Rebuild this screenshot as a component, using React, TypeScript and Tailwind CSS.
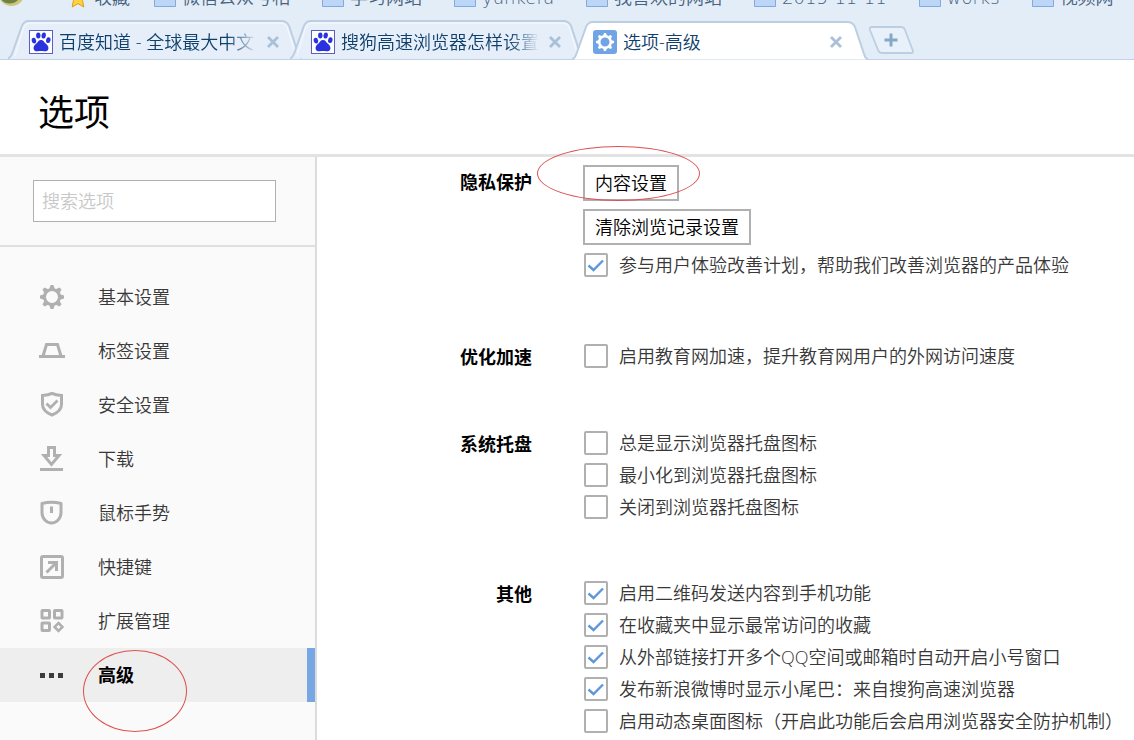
import type { ReactNode } from 'react';

function FolderIcon() {
  return (
    <svg viewBox="0 0 22 18" className="h-[18px] w-[22px] shrink-0" aria-hidden="true">
      <path d="M.5 1.5h8l2 2h11v14H.5z" fill="#bcd6f8" stroke="#86a9dc" />
    </svg>
  );
}

function StarIcon() {
  return (
    <svg viewBox="0 0 20 20" className="h-5 w-5 shrink-0" aria-hidden="true">
      <path d="M10 1l2.8 6 6.4.8-4.700 4.500L15.800 19 10 15.600 4.200 19l1.300-6.700L.8 7.800 7.200 7z" fill="#fcd43c" stroke="#e29a1c" />
    </svg>
  );
}

function PawIcon() {
  return (
    <svg viewBox="0 0 24 24" className="h-6 w-6" aria-hidden="true">
      <rect x=".5" y=".5" width="23" height="23" fill="#fff" stroke="#5a5fc0" />
      <g fill="#2a32e0">
        <ellipse cx="4.900" cy="10.600" rx="2.200" ry="2.900" transform="rotate(-12 4.900 10.600)" />
        <ellipse cx="9.300" cy="5.500" rx="2.200" ry="3" />
        <ellipse cx="14.700" cy="5.500" rx="2.200" ry="3" transform="rotate(8 14.700 5.500)" />
        <ellipse cx="19.300" cy="10.200" rx="2.200" ry="2.900" transform="rotate(12 19.300 10.200)" />
        <path d="M12 10c2.400 0 3.200 2.100 4.600 3.600 1.600 1.500 3.200 2.800 2.800 5.100-.4 2.300-2.400 2.900-4.200 2.600-1.200-.2-2-.4-3.200-.4s-2 .2-3.200.4c-1.800.3-3.800-.3-4.200-2.600-.4-2.300 1.200-3.600 2.800-5.100C8.800 12.100 9.600 10 12 10z" />
      </g>
    </svg>
  );
}

function Gear({ teeth, inner, width, tip, body }: { teeth: number; inner: number; width: number; tip: number; body: number }) {
  return (
    <g>
      {Array.from({ length: teeth }, (_, i) => (
        <path
          key={i}
          d={`M${12 - width} ${12 - body + 1}L${12 - width / 2} ${12 - tip}h${width}L${12 + width} ${12 - body + 1}z`}
          transform={`rotate(${(360 / teeth) * i} 12 12)`}
          fill="currentColor"
        />
      ))}
      <circle cx="12" cy="12" r={(body + inner) / 2} fill="none" stroke="currentColor" strokeWidth={body - inner} />
    </g>
  );
}

function SettingsTabIcon() {
  return (
    <svg viewBox="0 0 24 24" className="h-6 w-6 text-white" aria-hidden="true">
      <rect width="24" height="24" rx="3" fill="#70a4e4" />
      <Gear teeth={8} inner={4.5} body={7} tip={9} width={2} />
    </svg>
  );
}

function TabShape({ active }: { active: boolean }) {
  return (
    <svg viewBox="0 0 296 39" preserveAspectRatio="none" className="absolute inset-0 h-full w-full" aria-hidden="true">
      <path
        d="M0 38.500Q3 37 4 34L14 6Q16 1 21 1H275Q281 1 283 6L292 33Q293 37 296 38.500"
        fill={active ? '#ffffff' : '#e6eff9'}
        stroke="#bccee2"
        strokeWidth="2"
      />
      {!active && <path d="M7 36L16 7Q18 3 22 3H274Q279 3 281 7L290 36" fill="none" stroke="#f6faff" />}
    </svg>
  );
}

const bookmarks = ['微信公众号相', '学习网站', 'yunkefu', '我喜欢的网站', '2015-11-11', 'works', '视频网'];

const tabs = [
  { title: '百度知道 - 全球最大中文', icon: <PawIcon />, active: false },
  { title: '搜狗高速浏览器怎样设置', icon: <PawIcon />, active: false },
  { title: '选项-高级', icon: <SettingsTabIcon />, active: true },
];

function BrowserChrome() {
  return (
    <div className="bg-[#e3edf7] text-[#0f406c]">
      <nav aria-label="收藏栏" className="flex h-2.5 items-end overflow-hidden">
        <svg viewBox="0 0 28 28" className="h-7 w-7 shrink-0 self-end pb-1" aria-hidden="true">
          <circle cx="11" cy="13" r="15" fill="#c9c878" />
          <circle cx="9" cy="12" r="13" fill="#6f8148" />
        </svg>
        <div className="ml-10 flex shrink-0 items-end gap-8 font-['DejaVu_Sans','Noto_Sans_CJK_SC',sans-serif] text-[#46627f]">
          <a href="#favorites" className="-mr-2 flex items-center gap-1.5 leading-6 whitespace-nowrap">
            <StarIcon />
            收藏
          </a>
          {bookmarks.map((name) => (
            <a key={name} href="#bookmark" className="flex items-center gap-1.5 leading-6 whitespace-nowrap">
              <FolderIcon />
              {name}
            </a>
          ))}
        </div>
      </nav>
      <div className="flex h-[50px] items-end border-b border-[#c3d3e5] pl-2">
        {tabs.map((tab) => (
          <div
            key={tab.title}
            className={
              tab.active
                ? 'relative z-10 -mb-px flex h-[39px] w-[296px] items-center pt-0.5 pr-6 pl-[21px]'
                : 'relative -mr-3 flex h-[39px] w-[294px] items-center pt-1 pr-[21px] pl-[21px]'
            }
          >
            <TabShape active={tab.active} />
            <span className="relative">{tab.icon}</span>
            <a
              href="#tab"
              className={
                tab.active
                  ? 'relative ml-1.5 min-w-0 flex-1 overflow-hidden whitespace-nowrap'
                  : 'relative ml-1.5 min-w-0 flex-1 overflow-hidden mask-r-from-85% mask-r-to-100% whitespace-nowrap'
              }
            >
              {tab.title}
            </a>
            <button type="button" aria-label="关闭标签页" className="relative ml-2 p-0.5 text-[#a9c0d8]">
              <svg viewBox="0 0 12 12" className="h-3 w-3" aria-hidden="true">
                <path d="M1 1l10 10M11 1L1 11" stroke="currentColor" strokeWidth="2.800" />
              </svg>
            </button>
          </div>
        ))}
        <button type="button" aria-label="新建标签页" className="mb-[5px]">
          <svg viewBox="0 0 46 28" className="h-7 w-[46px]" aria-hidden="true">
            <path d="M4 1H33Q36 1 37 4L45 25Q45.500 27 43 27H14Q11 27 10 24L2 4Q1 1 4 1z" fill="#e8f1fa" stroke="#bccee2" strokeWidth="1.800" />
            <path d="M23 7.500v13M16.500 14h13" stroke="#86a8c8" strokeWidth="3" />
          </svg>
        </button>
      </div>
    </div>
  );
}

function NavIcon({ children }: { children: ReactNode }) {
  return (
    <svg viewBox="0 0 26 26" className="h-[26px] w-[26px] shrink-0" fill="none" stroke="#b0b0b0" strokeWidth="3" aria-hidden="true">
      {children}
    </svg>
  );
}

const navItems: { label: string; icon: ReactNode }[] = [
  {
    label: '基本设置',
    icon: (
      <g transform="translate(1 1)" color="#b0b0b0" stroke="none">
        <Gear teeth={8} inner={6} body={9} tip={12} width={2.800} />
      </g>
    ),
  },
  { label: '标签设置', icon: <path d="M0 18.500h26M4 18L7.500 6.500h11L22 18" /> },
  {
    label: '安全设置',
    icon: (
      <>
        <path d="M13 1.300c3 1.500 6.500 1.900 9.500 2.100v9.100c0 5-4.500 8.500-9.500 10.500-5-2-9.500-5.500-9.500-10.500V3.400c3-.2 6.500-.6 9.500-2.100z" strokeWidth="3" />
        <path d="M7.500 11.500l4 4 7-7" strokeWidth="2.800" />
      </>
    ),
  },
  {
    label: '下载',
    icon: (
      <>
        <path d="M9.500 1.500h6V9.500h4.500L12.500 18.500 5 9.500h4.500z" strokeWidth="3" />
        <path d="M1 23.500h23" />
      </>
    ),
  },
  {
    label: '鼠标手势',
    icon: (
      <>
        <path d="M3 3.500Q12.500.8 22 3.500V12.500c0 6-4.500 10.500-9.500 10.500S3 18.500 3 12.500z" strokeWidth="3" strokeLinejoin="round" />
        <path d="M12.500 6.500v6.500" strokeWidth="3" />
      </>
    ),
  },
  {
    label: '快捷键',
    icon: (
      <>
        <rect x="2.500" y="2.500" width="21" height="21" rx="1.500" />
        <path d="M7.500 18.500l9-9" />
        <path d="M9 8.500h8.500V17" />
      </>
    ),
  },
  {
    label: '扩展管理',
    icon: (
      <g strokeWidth="3">
        <rect x="3" y="2.500" width="7.500" height="7.500" rx=".5" />
        <rect x="15.500" y="2.500" width="7.500" height="7.500" rx=".5" />
        <rect x="3" y="15" width="7.500" height="7.500" rx=".5" />
        <path d="M19.500 15l3.900 3.900-3.900 3.900-3.900-3.900z" strokeWidth="2.600" />
      </g>
    ),
  },
  { label: '高级', icon: <path d="M1 13.500h5M10 13.500h5M19 13.500h5" stroke="#3c3c3c" strokeWidth="5" /> },
];

function Sidebar() {
  return (
    <aside className="w-[317px] shrink-0 border-r-2 border-[#dcdcdc] bg-[#fafafa]">
      <div className="border-b-2 border-[#dfdfdf] py-[23px] pr-[39px] pl-[33px]">
        <input
          type="search"
          aria-label="搜索选项"
          placeholder="搜索选项"
          className="block h-[42px] w-full border border-[#b0b0b0] bg-white px-2 outline-none placeholder:text-[#c8c8c8]"
        />
      </div>
      <nav aria-label="选项" className="pt-[23px]">
        {navItems.map(({ label, icon }) => {
          const active = label === '高级';
          return (
            <a
              key={label}
              href="#section"
              aria-current={active ? 'page' : undefined}
              className={
                active
                  ? 'relative flex h-[54px] items-center gap-[33px] border-r-8 border-[#76a7e4] bg-[#eeeeee] pl-[39px] font-bold text-black'
                  : 'flex h-[54px] items-center gap-[33px] pl-[39px] text-[#383838]'
              }
            >
              <NavIcon>{icon}</NavIcon>
              {label}
              {active && <span className="pointer-events-none absolute top-0.5 left-[83px] h-[82px] w-[104px] rounded-[50%] border border-[#e05050]" />}
            </a>
          );
        })}
      </nav>
    </aside>
  );
}

function Check({ label, checked = false }: { label: string; checked?: boolean }) {
  return (
    <label className="flex h-8 items-center gap-[11px] whitespace-nowrap text-[#383838]">
      <span className="relative ml-px h-6 w-6 shrink-0">
        <input type="checkbox" defaultChecked={checked} className="peer block h-6 w-6 appearance-none rounded-xs border-2 border-[#b0b0b0] bg-white" />
        <svg viewBox="0 0 24 24" className="pointer-events-none absolute inset-0 hidden h-6 w-6 peer-checked:block" aria-hidden="true">
          <path d="M4.500 12.500l5 4.500L19 7.500" fill="none" stroke="#5f97dc" strokeWidth="2.400" />
        </svg>
      </span>
      {label}
    </label>
  );
}

function Section({ title, children }: { title: string; children: ReactNode }) {
  return (
    <section className="flex items-start">
      <h2 className="w-[215px] shrink-0 pt-px text-right leading-8 font-bold text-black">{title}</h2>
      <div className="ml-[51px] flex flex-col items-start">{children}</div>
    </section>
  );
}

export default function App() {
  return (
    <div lang="zh-CN" className="flex min-h-screen flex-col overflow-hidden bg-white font-['Open_Sans','Noto_Sans_CJK_SC',sans-serif] text-[18px] leading-6 font-[350]">
      <BrowserChrome />
      <header className="border-b-3 border-[#e3e3e3] pt-[29px] pb-[17px] pl-[38px]">
        <h1 className="text-4xl leading-12 font-normal text-black">选项</h1>
      </header>
      <div className="flex flex-1">
        <Sidebar />
        <main className="flex min-w-0 flex-1 flex-col gap-[54px] pt-2">
          <Section title="隐私保护">
            <div className="relative mb-2">
              <button type="button" className="h-9 border-2 border-[#b0b0b0] bg-white px-2.5 text-black">
                内容设置
              </button>
              <span className="pointer-events-none absolute -top-[19px] -left-[46px] h-[55px] w-[163px] rounded-[50%] border border-[#e05050]" />
            </div>
            <button type="button" className="mb-1 h-9 border-2 border-[#b0b0b0] bg-white px-2.5 text-black">
              清除浏览记录设置
            </button>
            <div className="pb-[5px]">
              <Check label="参与用户体验改善计划，帮助我们改善浏览器的产品体验" checked />
            </div>
          </Section>
          <Section title="优化加速">
            <Check label="启用教育网加速，提升教育网用户的外网访问速度" />
          </Section>
          <Section title="系统托盘">
            <Check label="总是显示浏览器托盘图标" />
            <Check label="最小化到浏览器托盘图标" />
            <Check label="关闭到浏览器托盘图标" />
          </Section>
          <Section title="其他">
            <Check label="启用二维码发送内容到手机功能" checked />
            <Check label="在收藏夹中显示最常访问的收藏" checked />
            <Check label="从外部链接打开多个QQ空间或邮箱时自动开启小号窗口" checked />
            <Check label="发布新浪微博时显示小尾巴：来自搜狗高速浏览器" checked />
            <Check label="启用动态桌面图标（开启此功能后会启用浏览器安全防护机制）" />
          </Section>
        </main>
      </div>
    </div>
  );
}
